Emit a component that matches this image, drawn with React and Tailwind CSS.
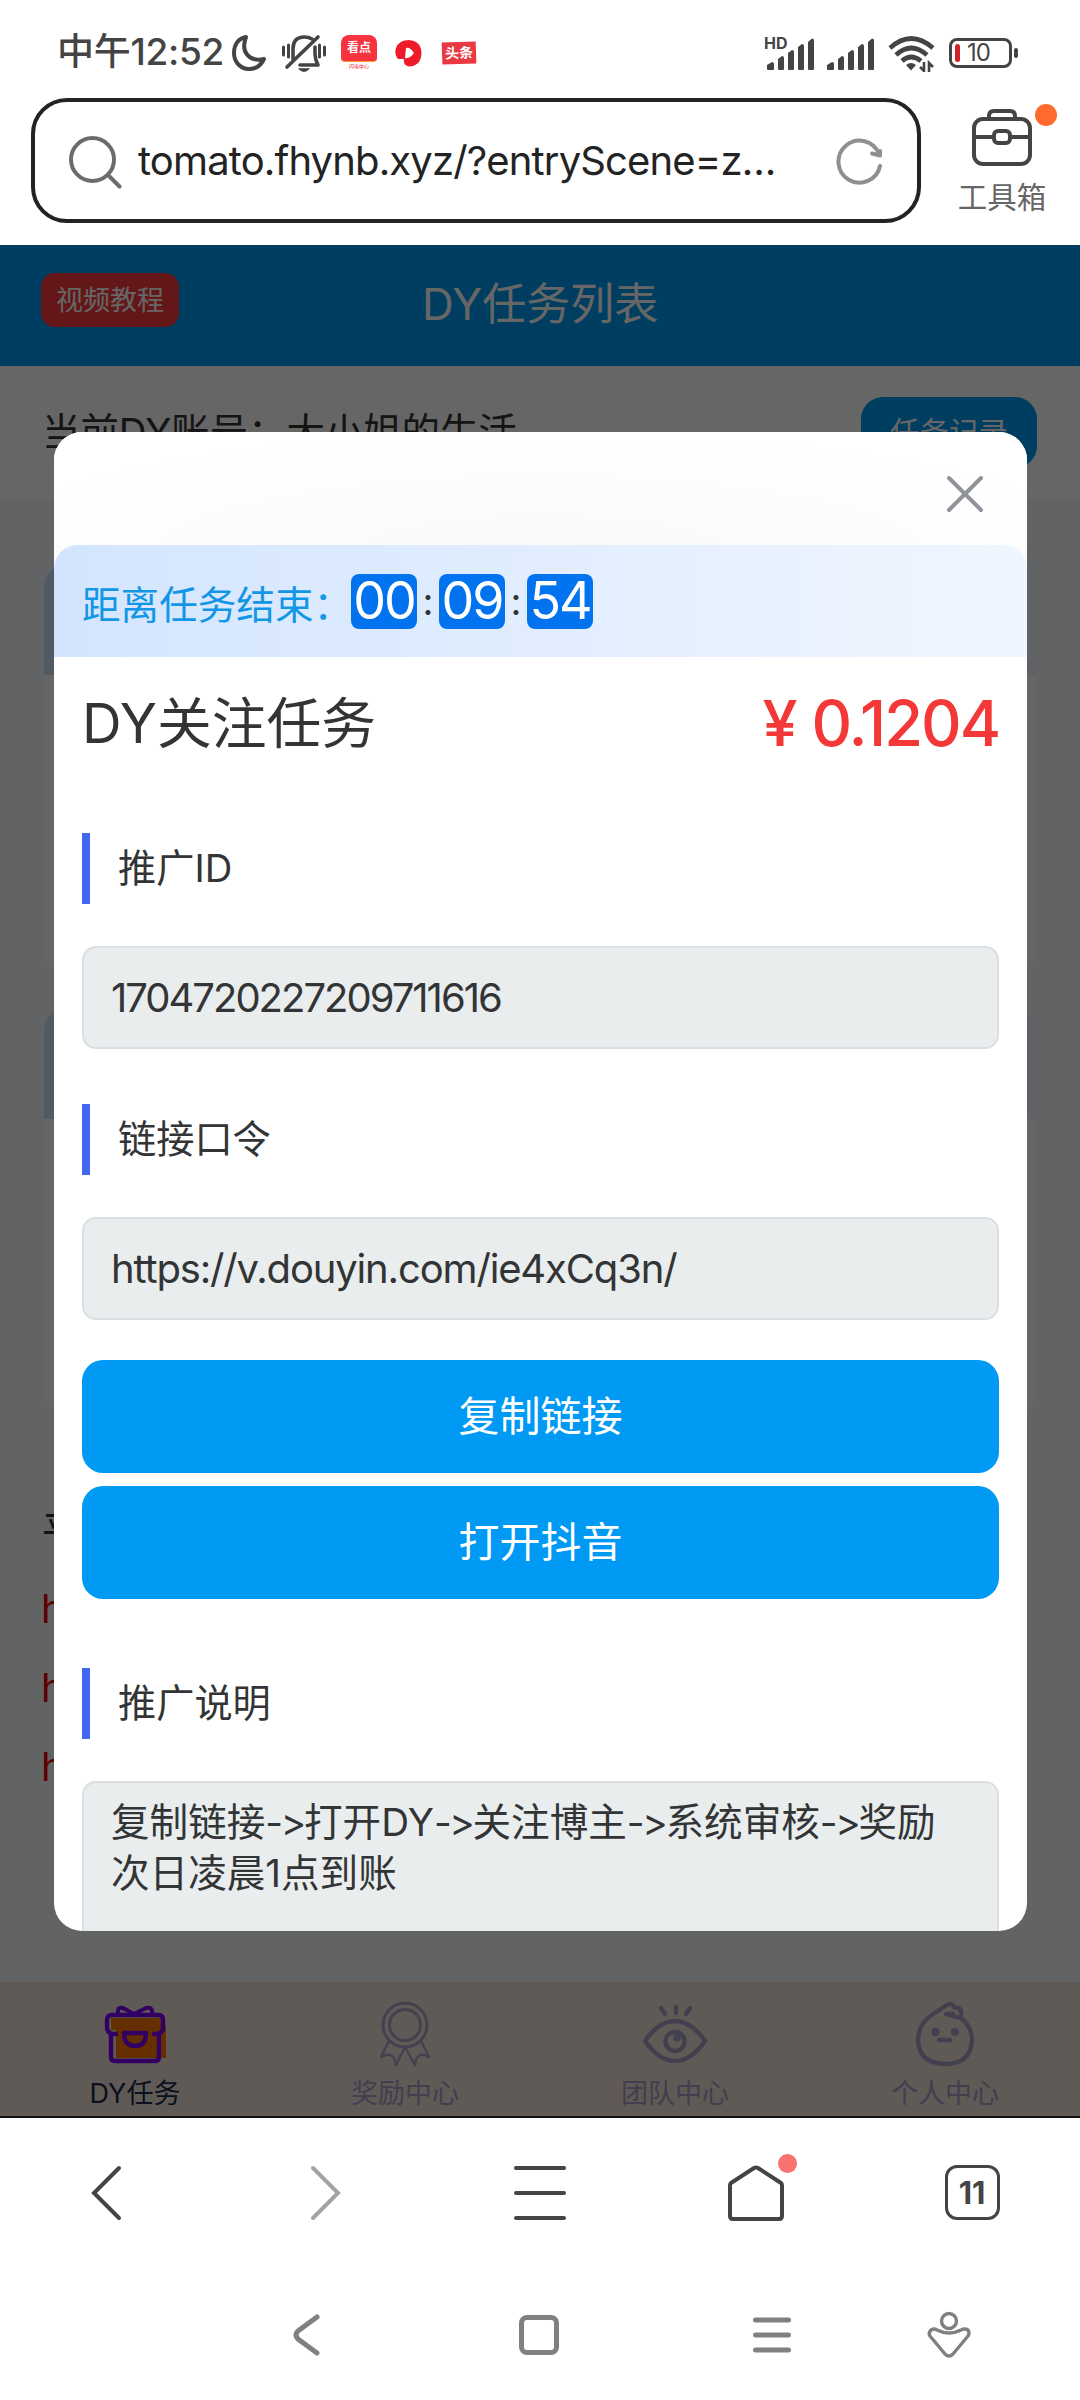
import { useState } from 'react';

const tabs = [
  { label: 'DY任务', icon: GiftIcon, active: true },
  { label: '奖励中心', icon: MedalIcon },
  { label: '团队中心', icon: EyeIcon },
  { label: '个人中心', icon: FaceIcon },
];

const steps = ['复制链接', '打开DY', '关注博主', '系统审核', '奖励'];

function GiftIcon() {
  return (
    <svg width="64" height="60" viewBox="0 0 64 60" fill="none">
      <path d="M8 14h52v7h3v33H13V26H8z" fill="#ff7600" />
      <g stroke="#7d00f8" strokeWidth="4.400" strokeLinejoin="round" strokeLinecap="round">
        <path d="M13 30H10Q4 29 4 23V16Q4 11 9 11H55Q60 11 60 16V23Q60 29 54 30H51" />
        <path d="M8 31V53Q8 57 12 57H52Q56 57 56 53V31" />
        <path d="M21 29H43Q43 42 32 42Q21 42 21 29z" />
        <path d="M15 10V7Q15 3 20 4L31 10L43 4Q49 3 49 7V10" strokeWidth="4" />
      </g>
    </svg>
  );
}

function MedalIcon() {
  return (
    <svg width="52" height="66" viewBox="0 0 52 66" fill="none" stroke="#a8a2c6" strokeWidth="3" strokeLinejoin="round">
      <circle cx="26" cy="24" r="22" />
      <circle cx="26" cy="24" r="15.500" />
      <path d="M10 40L2 56Q15 49 17 64L26 46L36 64Q38 49 50 56L42 40" strokeWidth="2.400" />
    </svg>
  );
}

function EyeIcon() {
  return (
    <svg width="66" height="60" viewBox="0 0 66 60" fill="none" stroke="#a69fc4" strokeWidth="4.400" strokeLinecap="round" strokeLinejoin="round">
      <path d="M3 37Q17 17 33 17T63 37Q49 57 33 57T3 37z" />
      <circle cx="33" cy="37.500" r="9.500" />
      <circle cx="35" cy="34" r="1.500" />
      <path d="M19 4l4 6M34 3v6M48 4l-4 6" />
    </svg>
  );
}

function FaceIcon() {
  return (
    <svg width="60" height="66" viewBox="0 0 60 66" fill="none" stroke="#a69fc4" strokeWidth="4.400" strokeLinecap="round" strokeLinejoin="round">
      <path d="M46 17Q57 26 57 39Q56 63 30 63Q3 62 3 38Q4 22 18 13L32 4Q37 1 39 6Q48 7 46 14L45 17L31 13H38" />
      <circle cx="20.500" cy="31" r="2" />
      <circle cx="40" cy="31" r="2" />
      <path d="M24 39h11" />
    </svg>
  );
}

function Signal() {
  return (
    <svg width="49" height="32" viewBox="0 0 49 32" fill="#444">
      <path d="M0 31V27l5-3q2 0 2 2v5q0 1-1 1H1q-1 0-1-1zM11 31V21l4-3q2 0 2 2v11q0 1-1 1h-4q-1 0-1-1zM21 31V15l4-3q2 0 2 2v17q0 1-1 1h-4q-1 0-1-1zM31 31V9l4-3q2 0 2 2v23q0 1-1 1h-4q-1 0-1-1zM41 31V4l4-3.500q2 0 2 2v28.500q0 1-1 1h-4q-1 0-1-1z" />
    </svg>
  );
}

function StatusBar() {
  return (
    <div className="flex h-[98px] items-start pl-[57px] pr-[62px] pt-[34px] text-[#444]">
      <span className="h-[36px] w-[174px] whitespace-nowrap text-[37px] font-medium leading-[36px] tracking-[-0.3px]">中午12:52</span>
      <svg width="36" height="38" viewBox="0 0 36 38" fill="none" stroke="currentColor" strokeWidth="4" strokeLinejoin="round">
        <path d="M15 3C9 19 19 28 33 25C29 33 23 35.500 17 35C8 34 3 27 3 19C3 10 8 4 15 3z" />
      </svg>
      <svg className="ml-[14px]" width="46" height="38" viewBox="0 0 46 38" fill="none" stroke="currentColor" strokeWidth="3.600" strokeLinecap="round" strokeLinejoin="round">
        <path d="M2.500 13v8M7.500 11v12M38.500 11v12M43.500 13v8" strokeWidth="3" />
        <path d="M12 25V15Q12 3 23 3Q28 3 31 5M34 13V20Q34 25 37 31H19M6 33L37 3" />
        <path d="M18 35q5 5 10 0z" fill="currentColor" strokeWidth="1" />
      </svg>
      <div className="ml-[14px] mt-px flex h-[35px] w-[36px] flex-col items-center overflow-hidden rounded-lg bg-white text-white">
        <div className="flex h-[27px] w-full items-center justify-center rounded-b-[4px] border-b border-[#ff9a3c] bg-[#f53440] text-[12px] font-bold leading-none">看点</div>
        <span className="mt-px text-[5px] leading-[6px] text-red-500">闪电中心</span>
      </div>
      <svg className="ml-[18px] mt-[5px]" width="28" height="28" viewBox="0 0 28 28">
        <path d="M3 20Q-1 15 1 9Q4 1 14 1Q26 2 26.500 14Q26 27 14 27.500Q8 27 9 20z" fill="#ee1c2a" />
        <path d="M11 9Q15 8 19 14Q15 20 10 19z" fill="#fff" />
      </svg>
      <div className="ml-[19px] mt-[8px] flex h-[22px] w-[34px] -rotate-2 items-center justify-center bg-[#ea3942] text-[14px] font-bold leading-none text-white">头条</div>

      <div className="ml-auto flex">
        <div className="relative mr-[11px] mt-[4px]">
          <span className="absolute -left-[3px] -top-[3px] text-[16px] font-bold leading-[16px]">HD</span>
          <Signal />
        </div>
        <div className="mr-[12px] mt-[4px]">
          <Signal />
        </div>
        <svg className="mt-[2px]" width="48" height="36" viewBox="0 0 48 36" fill="none" stroke="currentColor" strokeWidth="4.600">
          <path d="M2 12Q23-7 45 12M8 19Q23 5 39 19M14 25Q23 17 33 25" />
          <path d="M18 29q5-4 10 0l-5 5.500z" fill="currentColor" stroke="none" />
          <path d="M36 26v9l-4-4M41 36v-9l4 4" strokeWidth="2.600" />
        </svg>
        <div className="ml-[13px] mt-[4px] flex h-[30px] w-[63px] items-center rounded-[8px] border-[3px] border-[#444] pl-[3px]">
          <div className="h-[18px] w-[5px] rounded-sm bg-[#d3212b]" />
          <span className="ml-[7px] text-[24px] leading-none tracking-[-1px]">10</span>
        </div>
        <div className="ml-[2px] mt-[14px] h-[10px] w-[4px] rounded-sm bg-[#444]" />
      </div>
    </div>
  );
}

function AddressBar() {
  return (
    <div className="flex h-[147px] pl-[31px]">
      <div className="flex h-[125px] w-[890px] items-center rounded-[36px] border-4 border-[#232323] pl-[33px] pr-[33px]">
        <svg width="56" height="56" viewBox="0 0 56 56" fill="none" stroke="#6c6c6c" strokeWidth="4" strokeLinecap="round">
          <circle cx="24.500" cy="26.500" r="21.500" />
          <path d="M41 43l10.500 10.500" />
        </svg>
        <span className="ml-[14px] flex-1 whitespace-nowrap text-[40px] leading-[48px] tracking-[-0.850px] text-[#232323]">
          tomato.fhynb.xyz/?entryScene=z…
        </span>
        <svg width="48" height="48" viewBox="0 0 48 48" fill="none" stroke="#8f8f8f" strokeWidth="4" strokeLinecap="round" strokeLinejoin="round">
          <path d="M43 17A21 21 0 1 0 44 29" />
          <path d="M36 16.500l8 2V14" />
        </svg>
      </div>
      <div className="relative ml-[38px] flex w-[86px] flex-col items-center pt-[9px]">
        <svg width="62" height="60" viewBox="0 0 62 60" fill="none" stroke="#444" strokeWidth="4" strokeLinejoin="round">
          <rect x="3" y="12" width="56" height="45" rx="9" />
          <path d="M18 12V9Q18 4 23 4H39Q44 4 44 9V12M3 30H23M39 30H59" />
          <rect x="23" y="24" width="16" height="12" rx="4" />
        </svg>
        <span className="mt-[11px] whitespace-nowrap text-[29.500px] leading-[38px] text-[#666]">工具箱</span>
        <span className="absolute left-[76px] top-[6px] size-[22px] rounded-full bg-[#ff6a2e]" />
      </div>
    </div>
  );
}

function TaskCard({ className }) {
  return (
    <div className={`overflow-hidden rounded-[24px] bg-white ${className}`}>
      <div className="h-[112px] bg-linear-to-r from-[#c9e0fc] to-[#f0f5ff]" />
    </div>
  );
}

function TaskPage() {
  return (
    <div className="flex h-full flex-col bg-[#f6f8fa]">
      <header className="flex h-[121px] shrink-0 items-start bg-[#009bf2] text-white">
        <div className="ml-[41px] mt-[28px] flex h-[54px] w-[138px] items-center justify-center rounded-[14px] bg-[#fa3a3c] text-[27px] leading-none">视频教程</div>
        <h1 className="ml-[243px] mt-[31px] whitespace-nowrap text-[44px] leading-[56px]">DY任务列表</h1>
      </header>
      <div className="flex h-[134px] shrink-0 items-start justify-between bg-white pl-[42px] pr-[43px]">
        <span className="mt-[38px] text-[38.400px] leading-[56px] text-[#333]">当前DY账号：大小姐的生活</span>
        <div className="mt-[31px] flex h-[71px] w-[176px] items-center justify-center rounded-[22px] bg-[#009bf2] text-[29.500px] text-white">任务记录</div>
      </div>
      <TaskCard className="mx-[44px] mt-[63px] h-[410px] shrink-0" />
      <TaskCard className="mx-[44px] mt-[34px] h-[408px] shrink-0" />
      <div className="ml-[42px] mt-[85px] text-[38.600px] leading-[60px] text-[#333]">平</div>
      <div className="ml-[41px] mt-[9px] text-[39px] leading-[79px] text-[#e60000]">
        <p>h</p>
        <p>h</p>
        <p>h</p>
      </div>
      <nav className="mt-auto grid h-[134px] shrink-0 grid-cols-4 bg-[#ede1d4]">
        {tabs.map(({ label, icon: Icon, active }) => (
          <div key={label} className="flex flex-col items-center pt-[18px]">
            <div className="flex h-[68px] items-center">
              <Icon />
            </div>
            <span className={`mt-[8px] text-[27px] leading-[36px] ${active ? 'text-[#1c2a4a]' : 'text-[#a29cc8]'}`}>{label}</span>
          </div>
        ))}
      </nav>
    </div>
  );
}

function SectionTitle({ children, className }) {
  return (
    <div className={`flex h-[71px] items-center border-l-8 border-[#4067f0] pl-[28px] text-[38.200px] leading-none ${className}`}>
      {children}
    </div>
  );
}

function Field({ children }) {
  return (
    <div className="mt-[42px] flex h-[103px] items-center rounded-[14px] border-2 border-[#dadfe3] bg-[#e9edee] pl-[27px] pt-px">
      {children}
    </div>
  );
}

function TaskDialog({ onClose }) {
  const time = ['00', '09', '54'];

  return (
    <div className="ml-px mt-[187px] h-[1499px] w-[973px] overflow-hidden rounded-[28px] bg-white text-[#323435]">
      <div className="flex h-[113px] items-center justify-end bg-[radial-gradient(ellipse_60%_110%_at_50%_110%,#f9f9f9,#fff)] pr-[43px] pt-[10px]">
        <button onClick={onClose} aria-label="关闭">
          <svg width="38" height="38" viewBox="0 0 38 38" stroke="#909399" strokeWidth="4" strokeLinecap="round">
            <path d="M3 3l32 32M35 3L3 35" />
          </svg>
        </button>
      </div>

      <div className="bg-[#fcfcfc]">
        <div className="flex h-[112px] items-center rounded-t-[24px] bg-linear-to-r from-[#d3e5fe] to-[#f0f6ff] pl-[28px]">
          <span className="mt-[8px] w-[269px] whitespace-nowrap text-[38.600px] leading-none text-[#1296e6]">距离任务结束：</span>
          {time.map((part, i) => (
            <div key={part} className="flex items-center">
              {i > 0 && <span className="w-[22px] text-center text-[38px] leading-[50px]">:</span>}
              <span className="flex h-[55px] w-[66px] items-center justify-center rounded-[8px] bg-[#0273ee] pb-px text-[52px] leading-none tracking-[-2px] text-white">
                {part}
              </span>
            </div>
          ))}
        </div>
      </div>

      <div className="px-[28px]">
        <div className="flex h-[132px] items-center justify-between pt-px">
          <h2 className="whitespace-nowrap text-[54.800px] leading-none">DY关注任务</h2>
          <span className="text-[63px] font-medium leading-none tracking-[-2px] text-[#f43838]">¥<span className="ml-[16px]">0.1204</span></span>
        </div>

        <SectionTitle className="mt-[44px]">推广ID</SectionTitle>
        <Field>
          <span className="text-[40px] tracking-[-2px]">1704720227209711616</span>
        </Field>

        <SectionTitle className="mt-[55px]">链接口令</SectionTitle>
        <Field>
          <span className="text-[40px] tracking-[-1.150px]">https://v.douyin.com/ie4xCq3n/</span>
        </Field>

        <button className="mt-[40px] block h-[113px] w-full rounded-[21px] bg-[#0099f3] text-[41px] text-white">复制链接</button>
        <button className="mt-[13px] block h-[113px] w-full rounded-[21px] bg-[#0099f3] text-[41px] text-white">打开抖音</button>

        <SectionTitle className="mt-[69px]">推广说明</SectionTitle>
        <div className="mt-[42px] h-[220px] rounded-[14px] border-2 border-[#dadfe3] bg-[#e9edee] pl-[27px] pt-[14px] text-[38.600px] leading-[51px]">
          <p className="whitespace-nowrap">
            {steps.map((step, i) => (
              <span key={step}>
                {i > 0 && <span className="tracking-[-2.300px] [font-feature-settings:'calt'_0]">-&gt;</span>}
                {step}
              </span>
            ))}
          </p>
          <p>次日凌晨1点到账</p>
        </div>
      </div>
    </div>
  );
}

function BrowserNav() {
  return (
    <div className="grid h-[154px] grid-cols-5 items-center justify-items-center border-t-2 border-[#111] pb-[3px]">
      <svg className="-ml-[4px]" width="34" height="58" viewBox="0 0 34 58" fill="none" stroke="#444" strokeWidth="4" strokeLinecap="round">
        <path d="M30 4L5 29l25 25" />
      </svg>
      <svg className="ml-[4px]" width="34" height="58" viewBox="0 0 34 58" fill="none" stroke="#a3a3a3" strokeWidth="4" strokeLinecap="round">
        <path d="M4 4l25 25L4 54" />
      </svg>
      <svg width="52" height="58" viewBox="0 0 52 58" stroke="#444" strokeWidth="4" strokeLinecap="round">
        <path d="M2 4h48M2 29h48M2 54h48" />
      </svg>
      <div className="relative">
        <svg width="58" height="58" viewBox="0 0 58 58" fill="none" stroke="#444" strokeWidth="4" strokeLinejoin="round">
          <path d="M3 21Q3 20 4 19L27 4Q29 3 31 4L54 19Q55 20 55 21V52Q55 55 52 55H6Q3 55 3 52z" />
        </svg>
        <span className="absolute -top-[10px] left-[51px] size-[19px] rounded-full bg-[#f97171]" />
      </div>
      <div className="flex size-[55px] items-center justify-center rounded-[12px] border-[3.500px] border-[#444] text-[31px] font-bold leading-none text-[#444]">11</div>
    </div>
  );
}

function SystemNav() {
  return (
    <div className="flex h-[130px] items-center pl-[292px]">
      <svg width="30" height="44" viewBox="0 0 30 44" fill="none" stroke="#808080" strokeWidth="5" strokeLinecap="round">
        <path d="M25 4L6 18Q2 22 6 26L25 40" />
      </svg>
      <div className="ml-[197px] size-[40px] rounded-[8px] border-[5px] border-[#808080]" />
      <svg className="ml-[193px]" width="40" height="36" viewBox="0 0 40 36" stroke="#808080" strokeWidth="5" strokeLinecap="round">
        <path d="M3.500 3h33M3.500 18h33M3.500 33h33" />
      </svg>
      <svg className="ml-[135px]" width="44" height="48" viewBox="0 0 44 48" fill="none" stroke="#808080" strokeWidth="3.400" strokeLinejoin="round">
        <circle cx="22" cy="10" r="7.500" />
        <path d="M4 19Q7 17 10 19Q22 25 34 19Q38 17 41 19Q43 22 41 25L26 43Q22 47 18 43L3 25Q1 22 4 19z" />
      </svg>
    </div>
  );
}

export default function App() {
  const [open, setOpen] = useState(true);

  return (
    <div className="h-[2400px] w-[1080px] overflow-hidden bg-white font-['Inter','Noto_Sans_CJK_SC',sans-serif]">
      <StatusBar />
      <AddressBar />
      <div className="relative h-[1871px] overflow-hidden">
        <TaskPage />
        {open && (
          <div className="absolute inset-0 flex items-start justify-center bg-black/60">
            <TaskDialog onClose={() => setOpen(false)} />
          </div>
        )}
      </div>
      <BrowserNav />
      <SystemNav />
    </div>
  );
}
